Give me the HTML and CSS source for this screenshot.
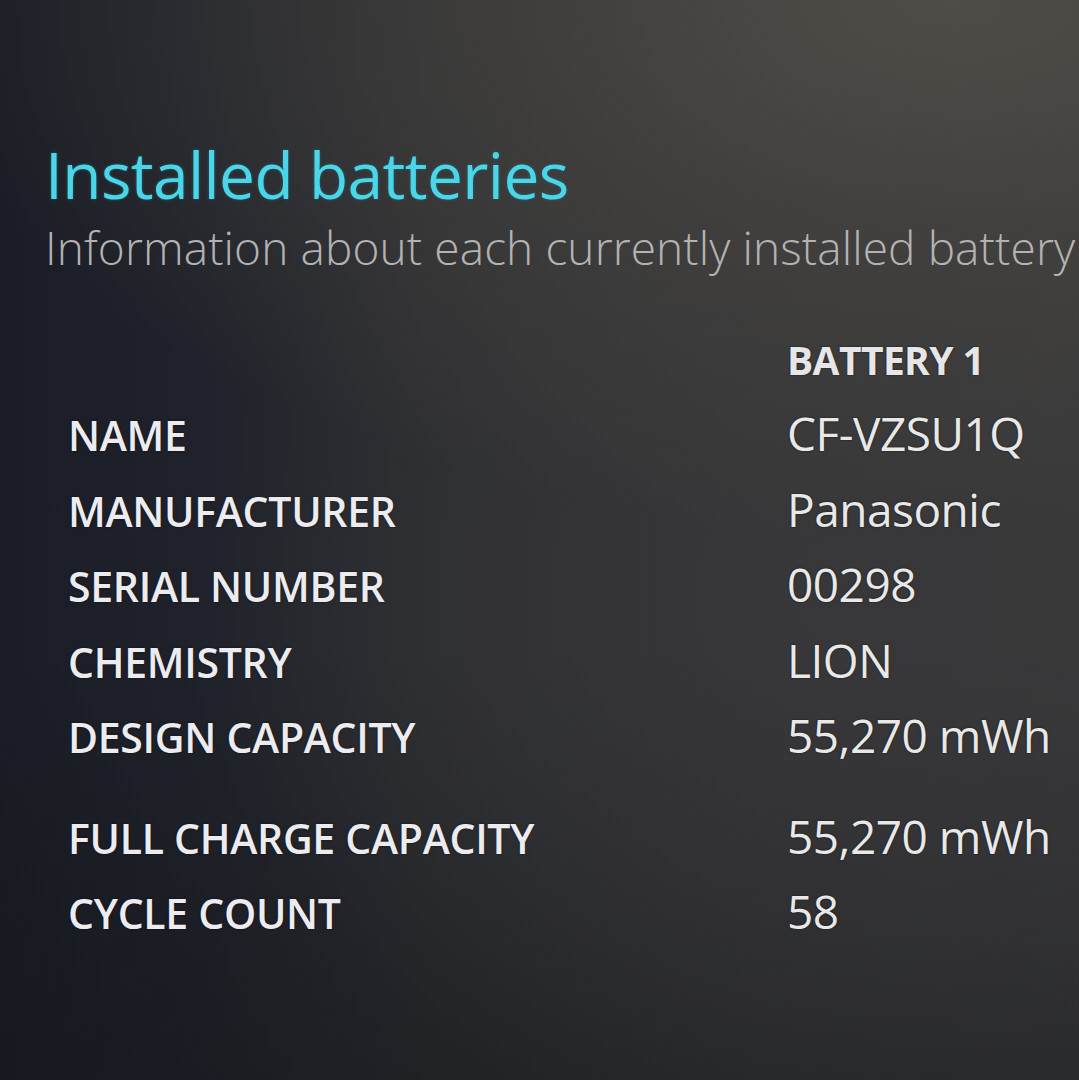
FILE: index.html
```html
<!DOCTYPE html>
<html lang="en">
<head>
<meta charset="utf-8">
<title>Installed batteries</title>
<link rel="stylesheet" href="styles.css">
</head>
<body>
<main class="page">
  <header class="intro">
    <h1 class="title">Installed batteries</h1>
    <p class="subtitle">Information about each currently installed battery</p>
  </header>
  <section class="table">
    <div class="row head"><span class="label"></span><span class="col-head">BATTERY 1</span></div>
    <div class="row"><span class="label">NAME</span><span class="value">CF-VZSU1Q</span></div>
    <div class="row"><span class="label">MANUFACTURER</span><span class="value">Panasonic</span></div>
    <div class="row"><span class="label">SERIAL NUMBER</span><span class="value">00298</span></div>
    <div class="row"><span class="label">CHEMISTRY</span><span class="value">LION</span></div>
    <div class="row"><span class="label">DESIGN CAPACITY</span><span class="value">55,270 mWh</span></div>
    <div class="row spaced"><span class="label">FULL CHARGE CAPACITY</span><span class="value">55,270 mWh</span></div>
    <div class="row"><span class="label">CYCLE COUNT</span><span class="value">58</span></div>
  </section>
</main>
</body>
</html>
```
FILE: styles.css
```css
html, body {
  margin: 0;
  padding: 0;
  height: 100%;
}
body {
  width: 1079px;
  height: 1080px;
  overflow: hidden;
  font-family: "Open Sans", "Noto Sans", sans-serif;
  background:
    radial-gradient(ellipse 95% 50% at 88% 0%, rgba(80, 78, 72, 0.95) 0%, rgba(70, 68, 64, 0.65) 45%, rgba(60, 60, 60, 0) 100%),
    radial-gradient(ellipse 60% 55% at 80% 55%, rgba(56, 56, 58, 0.8) 0%, rgba(50, 50, 54, 0) 100%),
    linear-gradient(to bottom, rgba(0, 0, 0, 0) 0%, rgba(0, 0, 0, 0) 60%, rgba(18, 20, 24, 0.45) 100%),
    linear-gradient(to right, #1a1d25 0%, #1f222a 18%, #2c2d31 40%, #353537 70%, #39393a 100%);
}
.page {
  padding-top: 143px;
}
.intro {
  padding-left: 45px;
}
.title {
  margin: 0;
  font-size: 64px;
  line-height: 1;
  font-weight: 400;
  letter-spacing: -0.6px;
  color: #4ad6e8;
  text-shadow: 0 0 3px rgba(70, 210, 230, 0.45), 0 0 2px rgba(0, 0, 0, 0.6);
  white-space: nowrap;
}
.subtitle {
  margin: 17px 0 0;
  font-size: 46px;
  line-height: 1;
  font-weight: 300;
  letter-spacing: 0.1px;
  color: #b3b3b3;
  white-space: nowrap;
}
.table {
  margin-top: 70px;
  padding-left: 68px;
}
.row {
  display: flex;
  align-items: baseline;
  height: 75.5px;
  line-height: 1;
  white-space: nowrap;
}
.row.head {
  height: 70px;
}
.row.spaced {
  margin-top: 25px;
}
.label {
  width: 719px;
  flex: none;
  font-size: 41px;
  font-weight: 600;
  color: #ececf0;
  letter-spacing: -0.3px;
  text-shadow: 0 0 2px rgba(0, 0, 0, 0.7);
}
.col-head {
  font-size: 39px;
  font-weight: 700;
  color: #e6e6e8;
  letter-spacing: -0.6px;
  text-shadow: 0 0 2px rgba(0, 0, 0, 0.7);
}
.value {
  font-size: 46px;
  font-weight: 400;
  color: #e8e8e8;
  letter-spacing: -0.5px;
  text-shadow: 0 0 2px rgba(0, 0, 0, 0.7);
}
```
